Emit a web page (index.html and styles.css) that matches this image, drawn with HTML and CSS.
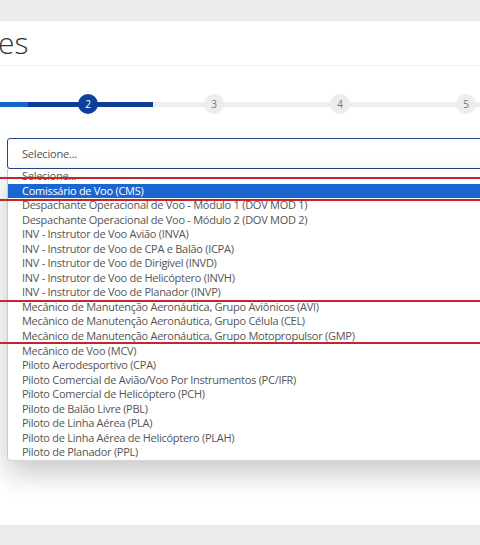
FILE: index.html
```
<!DOCTYPE html>
<html lang="pt-BR">
<head>
<meta charset="utf-8">
<title>Cadastro</title>
<link rel="stylesheet" href="styles.css">
</head>
<body>
<div class="card">
  <div class="card-header">
    <h1 class="title">es</h1>
  </div>
  <div class="card-body">
    <div class="stepper">
      <span class="step done"></span>
      <span class="step active">2</span>
      <span class="step">3</span>
      <span class="step">4</span>
      <span class="step">5</span>
    </div>
    <div class="field">
      <div class="select">Selecione...</div>
      <ul class="options">
        <li>Selecione...</li>
        <li class="selected">Comissário de Voo (CMS)</li>
        <li>Despachante Operacional de Voo - Módulo 1 (DOV MOD 1)</li>
        <li>Despachante Operacional de Voo - Módulo 2 (DOV MOD 2)</li>
        <li>INV - Instrutor de Voo Avião (INVA)</li>
        <li>INV - Instrutor de Voo de CPA e Balão (ICPA)</li>
        <li>INV - Instrutor de Voo de Dirigível (INVD)</li>
        <li>INV - Instrutor de Voo de Helicóptero (INVH)</li>
        <li>INV - Instrutor de Voo de Planador (INVP)</li>
        <li>Mecânico de Manutenção Aeronáutica, Grupo Aviônicos (AVI)</li>
        <li>Mecânico de Manutenção Aeronáutica, Grupo Célula (CEL)</li>
        <li>Mecânico de Manutenção Aeronáutica, Grupo Motopropulsor (GMP)</li>
        <li>Mecânico de Voo (MCV)</li>
        <li>Piloto Aerodesportivo (CPA)</li>
        <li>Piloto Comercial de Avião/Voo Por Instrumentos (PC/IFR)</li>
        <li>Piloto Comercial de Helicóptero (PCH)</li>
        <li>Piloto de Balão Livre (PBL)</li>
        <li>Piloto de Linha Aérea (PLA)</li>
        <li>Piloto de Linha Aérea de Helicóptero (PLAH)</li>
        <li>Piloto de Planador (PPL)</li>
      </ul>
    </div>
  </div>
</div>
<div class="mark mark-a1"></div>
<div class="mark mark-a2"></div>
<div class="mark mark-b1"></div>
<div class="mark mark-b2"></div>
</body>
</html>
```
FILE: styles.css
```
html, body {
  margin: 0;
  padding: 0;
}
body {
  width: 480px;
  height: 545px;
  overflow: hidden;
  background: #edecec;
  font-family: "Open Sans", "Noto Sans", sans-serif;
  position: relative;
}
.card {
  margin-top: 20px;
  margin-left: -20px;
  width: 540px;
  height: 505px;
  background: #ffffff;
  border-top: 1px solid #e6e6e6;
  box-sizing: border-box;
}
.card-header {
  height: 45px;
  border-bottom: 1px solid #f0f0f0;
  box-sizing: border-box;
  overflow: hidden;
}
.title {
  margin: 0;
  padding-left: 18px;
  font-size: 30px;
  font-weight: 300;
  color: #333333;
  line-height: 44px;
  height: 44px;
}
.card-body {
  padding-top: 28px;
}
.stepper {
  display: flex;
  gap: 106px;
  margin-left: -28px;
  width: 700px;
  height: 20px;
  align-items: center;
  background:
    linear-gradient(to right, #1565c8 0 76px, #0d3d98 76px 201px, #eeeeee 201px) no-repeat;
  background-size: 100% 5px;
  background-position: 0 8px;
}
.step {
  flex: 0 0 20px;
  height: 20px;
  border-radius: 50%;
  background: #ededed;
  color: #777777;
  font-size: 10px;
  line-height: 20px;
  text-align: center;
}
.step.done {
  background: #1565c8;
}
.step.active {
  background: #0d3f9b;
  color: #ffffff;
}
.field {
  margin-top: 24px;
  margin-left: 27px;
  position: relative;
}
.select {
  width: 520px;
  height: 31px;
  box-sizing: border-box;
  border: 1px solid #25468a;
  border-radius: 3px;
  padding-left: 14px;
  font-size: 11px;
  letter-spacing: -0.2px;
  line-height: 29px;
  color: #555555;
}
.options {
  position: absolute;
  top: 31px;
  left: 0;
  width: 520px;
  margin: 0;
  padding: 0;
  list-style: none;
  background: #ffffff;
  border-left: 1px solid #c8c8c8;
  border-bottom: 1px solid #d6d6d6;
  border-radius: 0 0 0 4px;
  box-shadow: 0 12px 28px rgba(0, 0, 0, 0.22);
  box-sizing: border-box;
}
.options li {
  height: 14.56px;
  line-height: 14.56px;
  padding-left: 14px;
  font-size: 11px;
  letter-spacing: -0.27px;
  color: #555555;
  white-space: nowrap;
}
.options li.selected {
  background: #1a66d1;
  color: #ffffff;
}
.mark {
  position: absolute;
  left: 0;
  width: 480px;
  height: 2px;
  background: #c1272d;
}
.mark-a1 { top: 177px; }
.mark-a2 { top: 199px; }
.mark-b1 { top: 300px; }
.mark-b2 { top: 342px; }
```
